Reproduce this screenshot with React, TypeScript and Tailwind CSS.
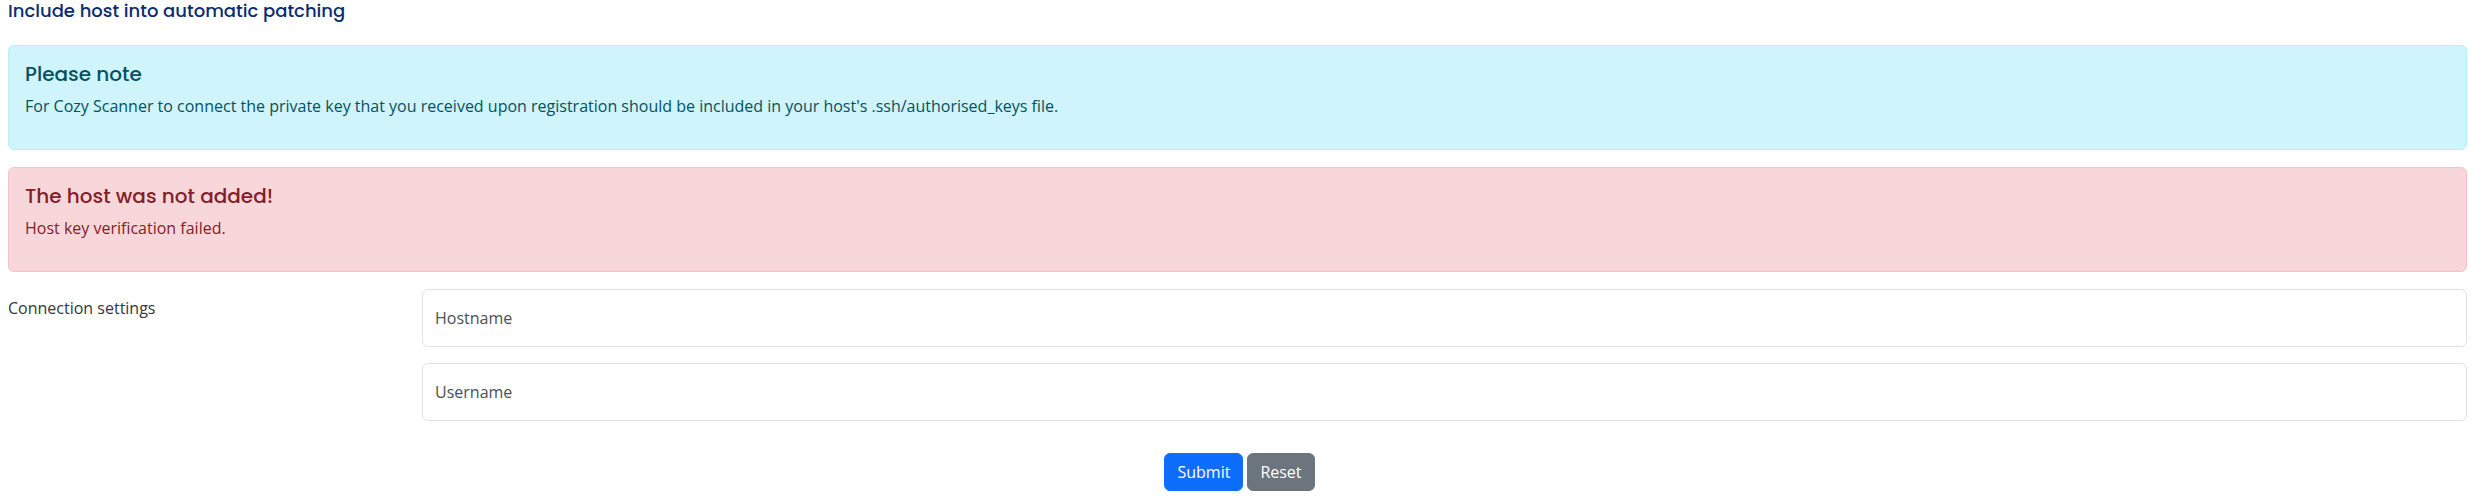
import React from "react";

const heading = { fontFamily: "Poppins, Inter, 'Noto Sans', sans-serif" };

export default function App() {
  return (
    <div
      className="w-[2472px] h-[499px] bg-white pl-[8px] pr-[5px] text-[16px] text-[#212529]"
      style={{ fontFamily: "'Open Sans', 'Noto Sans', sans-serif" }}
    >
      <div
        className="pt-[1px] mb-[24px] text-[18px] leading-[20px] font-medium text-[#0b2c6e]"
        style={heading}
      >
        Include host into automatic patching
      </div>

      <div className="rounded-[6px] border border-[#b6effb] bg-[#cff4fc] text-[#055160] p-4 mb-[17px]">
        <div className="text-[20px] leading-[24px] font-medium mb-2" style={heading}>
          Please note
        </div>
        <p className="leading-6 mb-[15px]">
          For Cozy Scanner to connect the private key that you received upon registration should be included in
          your host's .ssh/authorised_keys file.
        </p>
      </div>

      <div className="rounded-[6px] border border-[#f5c2c7] bg-[#f8d7da] text-[#842029] p-4 mb-[17px]">
        <div className="text-[20px] leading-[24px] font-medium mb-2" style={heading}>
          The host was not added!
        </div>
        <p className="leading-6 mb-[15px]">Host key verification failed.</p>
      </div>

      <div className="flex">
        <div className="w-[414px] shrink-0 pt-[7px] leading-6 text-[#33373b]">Connection settings</div>
        <div className="flex-1 flex flex-col gap-4">
          <div className="h-[58px] rounded-[6px] border border-[#dee2e6] bg-white px-3 pt-4 leading-6 text-[#495057]">
            Hostname
          </div>
          <div className="h-[58px] rounded-[6px] border border-[#dee2e6] bg-white px-3 pt-4 leading-6 text-[#495057]">
            Username
          </div>
        </div>
      </div>

      <div className="flex justify-center gap-[4px] mt-[32px] pl-[4px]">
        <button className="h-[38px] px-3 rounded-[6px] bg-[#0d6efd] text-white border border-[#0d6efd] leading-6">
          Submit
        </button>
        <button className="h-[38px] px-3 rounded-[6px] bg-[#6c757d] text-white border border-[#6c757d] leading-6">
          Reset
        </button>
      </div>
    </div>
  );
}
